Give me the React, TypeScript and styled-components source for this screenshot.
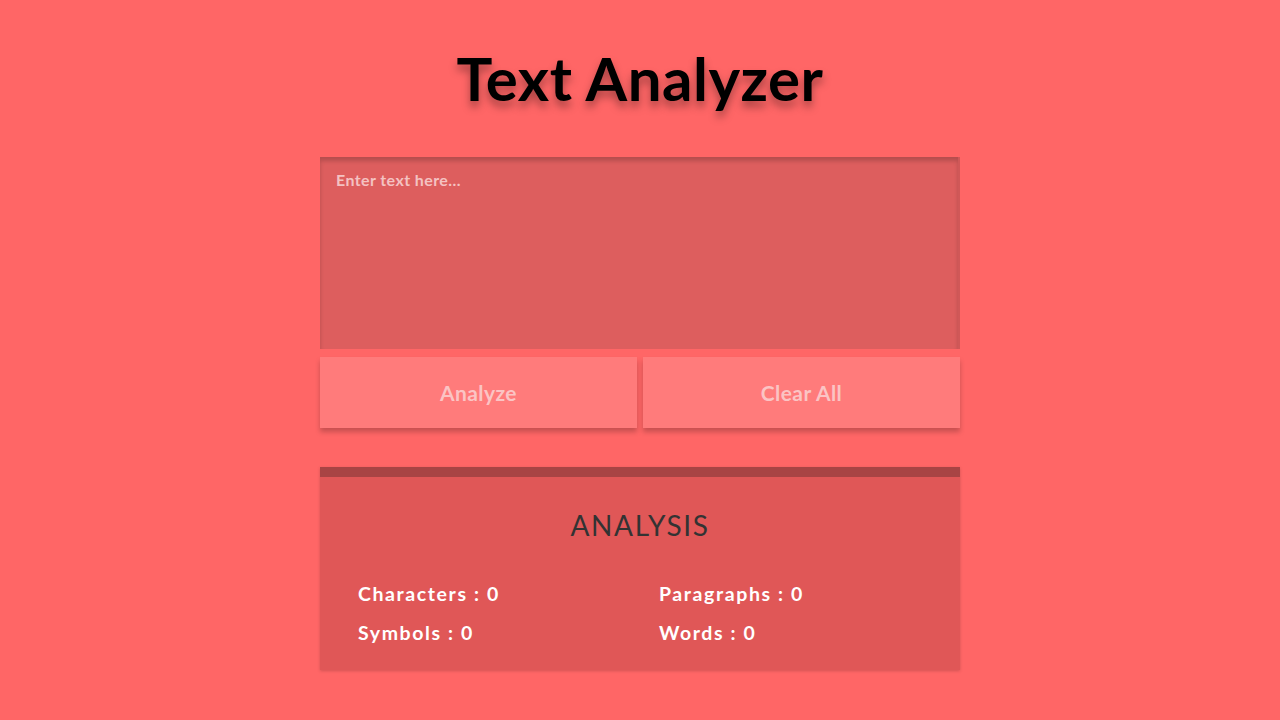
import React, { useState } from "react";
import styled, { createGlobalStyle } from "styled-components";

const GlobalStyle = createGlobalStyle`
  html, body {
    margin: 0;
    padding: 0;
    background: #ff6666;
    font-family: Lato, "Noto Sans", "Liberation Sans", sans-serif;
  }
`;

const Page = styled.div`
  min-height: 720px;
  display: flex;
  flex-direction: column;
  align-items: center;
  padding-top: 44px;
  box-sizing: border-box;
`;

const Title = styled.h1`
  margin: 0;
  font-size: 60px;
  line-height: 68px;
  font-weight: 700;
  letter-spacing: 0.5px;
  color: #000;
  text-shadow: 0 6px 8px rgba(0, 0, 0, 0.35);
`;

const Container = styled.div`
  width: 640px;
  margin-top: 45px;
  display: flex;
  flex-direction: column;
`;

const TextInput = styled.textarea`
  width: 100%;
  height: 192px;
  box-sizing: border-box;
  padding: 13px 16px;
  border: none;
  border-right: 2px solid rgba(0, 0, 0, 0.06);
  background: #dd5e5e;
  box-shadow: inset 0 4px 4px rgba(0, 0, 0, 0.18);
  font-family: inherit;
  font-size: 16px;
  font-weight: 700;
  letter-spacing: 0.4px;
  color: #fff;
  resize: none;
  outline: none;

  &::placeholder {
    color: #f4c2c2;
  }
`;

const ButtonRow = styled.div`
  display: grid;
  grid-template-columns: 1fr 1fr;
  gap: 6px;
  margin-top: 8px;
`;

const ActionButton = styled.button`
  height: 71px;
  border: none;
  background: #ff7b7b;
  color: #fbc4c4;
  font-family: inherit;
  font-size: 21px;
  font-weight: 700;
  letter-spacing: 0.4px;
  box-shadow: 0 4px 5px rgba(0, 0, 0, 0.22);
  cursor: pointer;
`;

const Analysis = styled.section`
  margin-top: 39px;
  background: #e05757;
  border-top: 10px solid #a84444;
  box-shadow: 0 1px 3px rgba(0, 0, 0, 0.18);
  padding: 30px 38px 26px;
`;

const AnalysisTitle = styled.h2`
  margin: 0;
  text-align: center;
  font-size: 28px;
  line-height: 36px;
  font-weight: 400;
  letter-spacing: 1.6px;
  color: #333;
`;

const StatsGrid = styled.div`
  display: grid;
  grid-template-columns: 301px 1fr;
  row-gap: 17px;
  margin-top: 40px;
`;

const Stat = styled.div`
  font-size: 19.5px;
  line-height: 22px;
  font-weight: 700;
  letter-spacing: 1.6px;
  color: #fff;
`;

const count = (text: string) => ({
  characters: text.length,
  paragraphs: text.split(/\n+/).filter((p) => p.trim()).length,
  symbols: (text.match(/[^\w\s]/g) || []).length,
  words: text.split(/\s+/).filter(Boolean).length,
});

const App: React.FC = () => {
  const [text, setText] = useState("");
  const [stats, setStats] = useState(count(""));

  return (
    <>
      <GlobalStyle />
      <Page>
        <Title>Text Analyzer</Title>
        <Container>
          <TextInput
            placeholder="Enter text here..."
            value={text}
            onChange={(e) => setText(e.target.value)}
          />
          <ButtonRow>
            <ActionButton onClick={() => setStats(count(text))}>Analyze</ActionButton>
            <ActionButton
              onClick={() => {
                setText("");
                setStats(count(""));
              }}
            >
              Clear All
            </ActionButton>
          </ButtonRow>
          <Analysis>
            <AnalysisTitle>ANALYSIS</AnalysisTitle>
            <StatsGrid>
              <Stat>Characters : {stats.characters}</Stat>
              <Stat>Paragraphs : {stats.paragraphs}</Stat>
              <Stat>Symbols : {stats.symbols}</Stat>
              <Stat>Words : {stats.words}</Stat>
            </StatsGrid>
          </Analysis>
        </Container>
      </Page>
    </>
  );
};

export default App;
